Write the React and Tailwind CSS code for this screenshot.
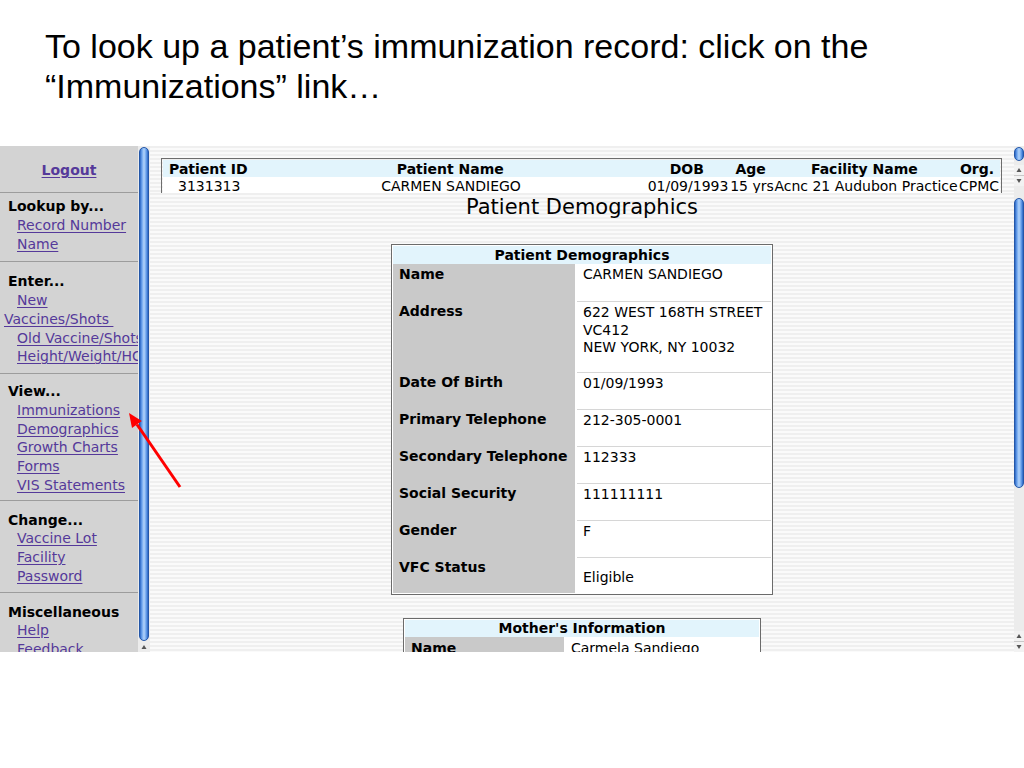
import React from "react";

const stripes =
  "bg-[repeating-linear-gradient(180deg,#efefef_0px,#efefef_2px,#fafafa_2px,#fafafa_4px)]";
const aqua =
  "bg-[linear-gradient(90deg,#2a66c4_0%,#6fa6ee_25%,#b3d4fa_50%,#6fa6ee_75%,#2a66c4_100%)]";
const link = "text-[#55399a] underline underline-offset-[2px]";

const sections = [
  { title: "Lookup by...", links: ["Record Number", "Name"], pad: "pt-[4px] pb-[8px]" },
  { title: "Enter...", links: ["New", "Vaccines/Shots\u00a0", "Old Vaccine/Shots", "Height/Weight/HC"], pad: "pt-[10px] pb-[7px]" },
  { title: "View...", links: ["Immunizations", "Demographics", "Growth Charts", "Forms", "VIS Statements"], pad: "pt-[8px] pb-[5px]" },
  { title: "Change...", links: ["Vaccine Lot", "Facility", "Password"], pad: "pt-[10px] pb-[6px]" },
  { title: "Miscellaneous", links: ["Help", "Feedback"], pad: "pt-[10px] pb-[5px]" },
];

const demographics = [
  { label: "Name", value: ["CARMEN SANDIEGO"], h: "h-[37px]" },
  { label: "Address", value: ["622 WEST 168TH STREET", "VC412", "NEW YORK, NY 10032"], h: "h-[71px]" },
  { label: "Date Of Birth", value: ["01/09/1993"], h: "h-[37px]" },
  { label: "Primary Telephone", value: ["212-305-0001"], h: "h-[37px]" },
  { label: "Secondary Telephone", value: ["112333"], h: "h-[37px]" },
  { label: "Social Security", value: ["111111111"], h: "h-[37px]" },
  { label: "Gender", value: ["F"], h: "h-[37px]" },
  { label: "VFC Status", value: ["Eligible"], h: "h-[36px]", low: true },
];

function Arrows() {
  return (
    <div className="flex flex-col items-center bg-[#f2f2f2]">
      <svg width="10" height="10" viewBox="0 0 10 10">
        <path d="M5 3 L7.5 7 L2.5 7 Z" fill="#555" />
      </svg>
      <div className="h-px w-full bg-[#c8c8c8]" />
      <svg width="10" height="10" viewBox="0 0 10 10">
        <path d="M2.5 3 L7.5 3 L5 7 Z" fill="#555" />
      </svg>
    </div>
  );
}

function Sidebar() {
  return (
    <div className="w-[138px] shrink-0 bg-[#d3d3d3] overflow-hidden whitespace-nowrap text-[14px] leading-[18.75px] font-['DejaVu_Sans',sans-serif]">
      <div className="h-[46px] flex items-center justify-center pt-[3px]">
        <span className={`font-bold ${link}`}>Logout</span>
      </div>
      {sections.map((s) => (
        <div key={s.title} className={`border-t border-[#9c9c9c] ${s.pad}`}>
          <div className="pl-[8px] font-bold text-black">{s.title}</div>
          {s.links.map((l) => (
            <div key={l} className={l.startsWith("Vaccines/") ? "pl-[4px]" : "pl-[17px]"}>
              <span className={link}>{l}</span>
            </div>
          ))}
        </div>
      ))}
    </div>
  );
}

function PatientBar() {
  const head = [
    ["Patient ID", "w-[218px] pl-[6px] justify-start"],
    ["Patient Name", "w-[140px] justify-center"],
    ["", "w-[127px]"],
    ["DOB", "w-[80px] justify-center"],
    ["Age", "w-[48px] justify-center"],
    ["Facility Name", "w-[180px] justify-center"],
    ["Org.", "w-[46px] justify-center"],
  ];
  const data = ["3131313", "CARMEN SANDIEGO", "", "01/09/1993", "15 yrs", "Acnc 21 Audubon Practice", "CPMC"];
  return (
    <div className="ml-[11px] mt-[12px] w-[841px] border border-[#6d6d6d] p-px text-[14px] leading-[16px] font-['DejaVu_Sans',sans-serif] whitespace-nowrap">
      <div className="flex h-[17px] items-center bg-[#e2f4fc] font-bold">
        {head.map(([t, c], i) => (
          <div key={i} className={`flex ${c}`}>{t}</div>
        ))}
      </div>
      <div className="flex h-[17px] items-center bg-white">
        {data.map((t, i) => (
          <div key={i} className={`flex shrink-0 ${head[i][1]} ${i === 0 ? "pl-[15px]" : ""}`}>
            <span className="shrink-0">{t}</span>
          </div>
        ))}
      </div>
    </div>
  );
}

function Demographics() {
  return (
    <div className="mx-auto w-[382px] border border-[#6b6b6b] p-px bg-white">
      <div className="h-[18px] bg-[#e2f4fc] text-center font-bold leading-[18px]">Patient Demographics</div>
      {demographics.map((r, i) => (
        <div key={r.label} className={`flex ${r.h}`}>
          <div className="w-[182px] shrink-0 bg-[#c9c9c9] pl-[6px] pt-[2px] font-bold whitespace-nowrap">{r.label}</div>
          <div className={`ml-[2px] flex-1 pl-[6px] ${r.low ? "pt-[11px]" : "pt-[2px]"} leading-[17.5px] ${i > 0 ? "border-t border-[#d6d6d6]" : ""}`}>
            {r.value.map((v) => (
              <div key={v}>{v}</div>
            ))}
          </div>
        </div>
      ))}
    </div>
  );
}

function Mother() {
  return (
    <div className="mx-auto mt-[23px] w-[358px] border border-[#6b6b6b] p-px bg-white">
      <div className="h-[17px] bg-[#e2f4fc] text-center font-bold leading-[17px]">Mother's Information</div>
      <div className="flex h-[37px]">
        <div className="w-[159px] shrink-0 bg-[#c9c9c9] pl-[6px] pt-[3px] font-bold">Name</div>
        <div className="ml-[2px] flex-1 pl-[5px] pt-[3px]">Carmela Sandiego</div>
      </div>
    </div>
  );
}

export default function App() {
  return (
    <div className="relative w-[1024px] h-[768px] bg-white overflow-hidden">
      <div className="pt-[26px] pl-[45px] text-[34px] leading-[40px] text-black font-['Liberation_Sans',Arial,sans-serif]">
        <div>To look up a patient’s immunization record: click on the</div>
        <div>“Immunizations” link…</div>
      </div>

      <div className="mt-[40px] flex h-[506px] w-[1024px] overflow-hidden">
        <Sidebar />

        {/* left frame scrollbar */}
        <div className="w-[12px] shrink-0 bg-[#ececec] flex flex-col items-center pt-[1px]">
          <div className={`w-[10px] h-[494px] rounded-full border border-[#2457a8] ${aqua}`} />
          <svg width="10" height="10" viewBox="0 0 10 10" className="mt-[1px]">
            <path d="M5 3 L7.5 7 L2.5 7 Z" fill="#555" />
          </svg>
        </div>

        {/* main frames */}
        <div className="flex-1 flex flex-col">
          <div className={`h-[47px] shrink-0 overflow-hidden ${stripes}`}>
            <PatientBar />
          </div>
          <div className={`flex-1 overflow-hidden ${stripes} text-[14px] leading-[16px] text-black font-['DejaVu_Sans',sans-serif]`}>
            <div className="pt-[2px] text-center text-[21px] leading-[24px]">Patient Demographics</div>
            <div className="mt-[25px]">
              <Demographics />
              <Mother />
            </div>
          </div>
        </div>

        {/* right scrollbars */}
        <div className="w-[10px] shrink-0 flex flex-col bg-[#ececec]">
          <div className="h-[47px] shrink-0 flex flex-col">
            <div className={`mt-[1px] h-[14px] rounded-full border border-[#2457a8] ${aqua}`} />
            <div className="mt-[4px]"><Arrows /></div>
          </div>
          <div className="flex-1 flex flex-col">
            <div className={`mt-[5px] h-[290px] rounded-full border border-[#2457a8] ${aqua}`} />
            <div className="flex-1" />
            <Arrows />
          </div>
        </div>
      </div>

      {/* red annotation arrow */}
      <svg className="absolute left-0 top-0 pointer-events-none" width="1024" height="768">
        <line x1="180" y1="487" x2="137" y2="424.5" stroke="#ff0000" strokeWidth="3" />
        <path d="M129 413 L141.8 421.1 L132 427.9 Z" fill="#ff0000" />
      </svg>
    </div>
  );
}
